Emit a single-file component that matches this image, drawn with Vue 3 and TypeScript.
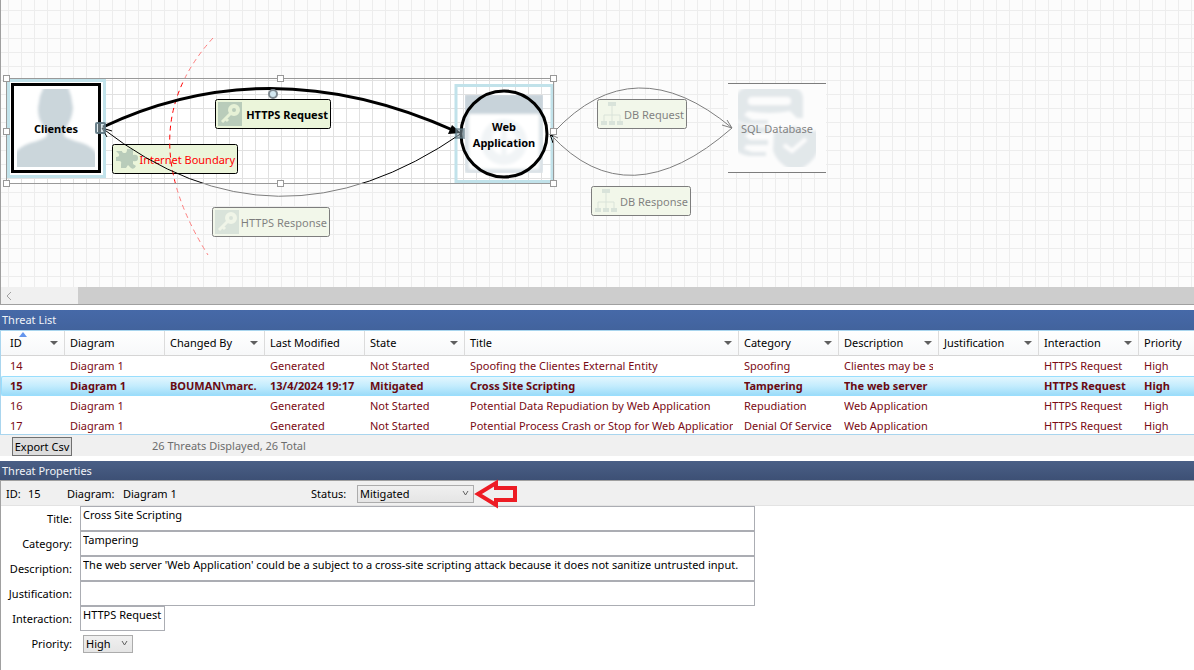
<script setup lang="ts">
import { ref } from 'vue'

type IconName = 'key' | 'puzzle' | 'tree'

interface FlowLabel {
  x: number
  y: number
  w: number
  text: string
  icon: IconName
  kind: 'plain' | 'strong' | 'boundary'
}

interface Column {
  key: string
  label: string
  filter: boolean
}

interface Threat {
  id: number
  cells: string[]
}

const labels: FlowLabel[] = [
  { x: 112, y: 144, w: 126, text: 'Internet Boundary', icon: 'puzzle', kind: 'boundary' },
  { x: 215, y: 99, w: 116, text: 'HTTPS Request', icon: 'key', kind: 'strong' },
  { x: 212, y: 207, w: 118, text: 'HTTPS Response', icon: 'key', kind: 'plain' },
  { x: 597, y: 99, w: 90, text: 'DB Request', icon: 'tree', kind: 'plain' },
  { x: 591, y: 186, w: 100, text: 'DB Response', icon: 'tree', kind: 'plain' },
]

const handles: [number, number][] = [
  [6, 78], [280, 78], [553, 78],
  [6, 131], [553, 131],
  [6, 183], [280, 183], [553, 183],
]

const columns: Column[] = [
  { key: 'id', label: 'ID', filter: true },
  { key: 'diagram', label: 'Diagram', filter: false },
  { key: 'changed', label: 'Changed By', filter: true },
  { key: 'modified', label: 'Last Modified', filter: false },
  { key: 'state', label: 'State', filter: true },
  { key: 'title', label: 'Title', filter: true },
  { key: 'category', label: 'Category', filter: true },
  { key: 'description', label: 'Description', filter: true },
  { key: 'justification', label: 'Justification', filter: true },
  { key: 'interaction', label: 'Interaction', filter: true },
  { key: 'priority', label: 'Priority', filter: false },
]

const threats: Threat[] = [
  { id: 14, cells: ['14', 'Diagram 1', '', 'Generated', 'Not Started', 'Spoofing the Clientes External Entity', 'Spoofing', 'Clientes may be s', '', 'HTTPS Request', 'High'] },
  { id: 15, cells: ['15', 'Diagram 1', 'BOUMAN\\marc.', '13/4/2024 19:17', 'Mitigated', 'Cross Site Scripting', 'Tampering', 'The web server', '', 'HTTPS Request', 'High'] },
  { id: 16, cells: ['16', 'Diagram 1', '', 'Generated', 'Not Started', 'Potential Data Repudiation by Web Application', 'Repudiation', 'Web Application', '', 'HTTPS Request', 'High'] },
  { id: 17, cells: ['17', 'Diagram 1', '', 'Generated', 'Not Started', 'Potential Process Crash or Stop for Web Application', 'Denial Of Service', 'Web Application', '', 'HTTPS Request', 'High'] },
]

const selectedId = ref(15)
const status = ref('Mitigated')
const priority = ref('High')
const title = ref('Cross Site Scripting')
const category = ref('Tampering')
const description = ref("The web server 'Web Application' could be a subject to a cross-site scripting attack because it does not sanitize untrusted input.")
const justification = ref('')
const interaction = ref('HTTPS Request')
</script>

<template>
  <main class="app">
    <section class="canvas" aria-label="Diagram">
      <svg class="diagram" role="img" aria-label="Data flow diagram">
        <defs>
          <pattern id="grid" x="8" y="10" width="13" height="14" patternUnits="userSpaceOnUse">
            <path d="M0.5 0V14M0 0.5H13" stroke="#e1e1e1" fill="none" />
          </pattern>
          <filter id="soft" x="-10%" y="-10%" width="120%" height="120%">
            <feGaussianBlur stdDeviation="1.5" />
          </filter>
          <filter id="softer" x="-10%" y="-10%" width="120%" height="120%">
            <feGaussianBlur stdDeviation="0.6" />
          </filter>
          <clipPath id="personClip"><rect x="17" y="89" width="78" height="78" /></clipPath>
          <clipPath id="webClip"><rect x="465" y="95" width="78" height="78" /></clipPath>
          <clipPath id="dbClip"><rect x="738" y="89" width="78" height="78" /></clipPath>
        </defs>

        <rect width="100%" height="100%" fill="#fff" />
        <rect width="100%" height="100%" fill="url(#grid)" />

        <!-- external entity -->
        <rect x="8.5" y="80.5" width="96" height="96" fill="#fff" stroke="#c1e2ea" stroke-width="3" />
        <rect x="12.5" y="84.5" width="87" height="87" fill="#fff" stroke="#000" stroke-width="3" />
        <g clip-path="url(#personClip)">
          <path
            filter="url(#soft)"
            fill="#cbd6db"
            d="M45 84H67L71 96L73 108Q72 118 68 124Q66 129 64 131V136Q70 140 82 143Q94 147 97 155V172H14V155Q18 147 30 143Q42 140 47 136V131Q44 128 42 124Q38 118 38 108L40 96Z"
          />
        </g>
        <text class="node strong" x="56" y="133">Clientes</text>

        <!-- process -->
        <rect x="456" y="85.5" width="96" height="96" fill="none" stroke="#c1e2ea" stroke-width="3" />
        <circle cx="504" cy="134" r="43" fill="#fff" />
        <g clip-path="url(#webClip)">
          <g filter="url(#soft)">
            <rect x="464" y="94" width="80" height="80" rx="4" fill="#d9e1e6" />
            <rect x="464" y="94" width="80" height="20" fill="#c8d3da" />
            <rect x="469" y="114" width="70" height="55" fill="#fff" />
            <circle cx="504" cy="142" r="18" fill="none" stroke="#f1f4f6" stroke-width="10" />
            <path d="M492 142H516M504 128V156" stroke="#f1f4f6" stroke-width="5" />
          </g>
        </g>
        <circle cx="504" cy="134" r="43" fill="none" stroke="#000" stroke-width="3" />
        <text class="node strong" x="504" y="131">Web</text>
        <text class="node strong" x="504" y="147">Application</text>

        <!-- data store -->
        <rect x="728" y="83" width="98" height="90" fill="#fff" />
        <g clip-path="url(#dbClip)">
          <g filter="url(#soft)">
            <path fill="#cbd6db" d="M736 96Q740 87 750 87H790Q802 88 803 97V118H797L790 111Q770 115 748 111L744 115L752 120H768V124H745L736 120Z" />
            <rect x="748" y="97" width="43" height="8" rx="4" fill="#fff" />
            <path fill="#cbd6db" d="M736 121L747 127H770V133H748L745 136L750 140H768V145H746L744 149L752 152H766V156H748Q736 153 736 148Z" />
            <path fill="#cbd6db" d="M774 132Q786 131 794 126Q802 131 818 131V151Q812 165 795 172Q776 163 773 150Z" />
            <path fill="none" stroke="#fff" stroke-width="4" d="M784 145L792 151L806 139" />
          </g>
        </g>
        <path d="M728 83.5H826M728 172.5H826" stroke="#000" />
        <text class="node" x="777" y="133">SQL Database</text>

        <!-- flow captions -->
        <g v-for="l in labels" :key="l.text" :transform="`translate(${l.x} ${l.y})`">
          <rect x="0.5" y="0.5" :width="l.w - 1" height="29" rx="2" fill="#ebf5da" stroke="#000" />
          <g v-if="l.icon === 'key'" filter="url(#softer)">
            <rect x="3" y="3" width="24" height="24" fill="#b9ccba" />
            <circle cx="19" cy="11" r="4" fill="none" stroke="#e6f1d6" stroke-width="4" />
            <path d="M16 14L7 23M10 19L13 22" stroke="#e6f1d6" stroke-width="3" fill="none" />
          </g>
          <g v-else-if="l.icon === 'puzzle'" filter="url(#softer)">
            <path fill="#b9ccba" d="M4 7H10Q10 9 13 9Q15 9 15 5H21V11Q26 10 26 14Q26 18 21 17V20L24 22Q22 26 19 24L16 21L14 24H9V20Q10 17 7 17H4V13Q8 13 7 10Z" />
          </g>
          <g v-else filter="url(#softer)" stroke="#b9ccba" fill="#b9ccba">
            <path d="M15 6V22M7 22V16H23V22" fill="none" stroke-width="1" />
            <path stroke="none" d="M11 3H19V7H11ZM4 22H10V26H4ZM12 22H18V26H12ZM20 22H26V26H20Z" />
          </g>
          <text class="caption" :class="l.kind" :x="l.w - 3" y="20">{{ l.text }}</text>
        </g>

        <!-- flows -->
        <path d="M213 38Q129 130 208 255" fill="none" stroke="#f00" stroke-dasharray="5 4" />
        <path d="M103 127Q270 48 455 131" fill="none" stroke="#000" stroke-width="3" />
        <path d="M448 134L461 133L452 125Z" fill="#000" />
        <path d="M462 133Q275 262 102 128M112 131L102 128L107 137" fill="none" stroke="#000" />
        <path d="M554 132Q634 46 732 128M722 125L732 128L727 120" fill="none" stroke="#000" />
        <path d="M732 128Q628 219 551 135M558 138L550 134L553 143" fill="none" stroke="#000" />

        <rect x="96" y="123" width="9" height="10" rx="1" fill="#bcd6e0" fill-opacity="0.5" stroke="#5c7480" stroke-width="2" stroke-opacity="0.9" />
        <rect x="456" y="129" width="8" height="9" fill="#8fa9b6" fill-opacity="0.5" stroke="#5c7480" stroke-width="2" stroke-opacity="0.6" />

        <!-- everything outside the selection is faded -->
        <path fill="#f9f9f9" fill-opacity="0.5" fill-rule="evenodd" d="M0 0H4000V287H0ZM6 78V183H553V78Z" />

        <rect x="6.5" y="78.5" width="547" height="105" fill="none" stroke="#999" />
        <rect
          v-for="([hx, hy], i) in handles"
          :key="i"
          :x="hx - 2.5"
          :y="hy - 2.5"
          width="6"
          height="6"
          fill="#fff"
          stroke="#999"
        />
        <circle cx="273" cy="94" r="4" fill="#d3e8f1" stroke="#7f8990" stroke-width="2" />
      </svg>
      <div class="scrollbar">
        <button class="scroll-left" type="button" aria-label="Scroll left">
          <svg width="6" height="8"><path d="M5 0L1 4L5 8" fill="none" stroke="#a0a0a0" /></svg>
        </button>
        <div class="thumb"></div>
      </div>
    </section>

    <h2 class="bar list-bar">Threat List</h2>
    <div class="list">
      <table>
        <colgroup>
          <col v-for="c in columns" :key="c.key" :class="`col-${c.key}`" />
        </colgroup>
        <thead>
          <tr>
            <th v-for="c in columns" :key="c.key" scope="col">
              <div class="head">
                <span>{{ c.label }}</span>
                <button v-if="c.filter" type="button" :aria-label="`Filter ${c.label}`">
                  <svg width="8" height="4"><path d="M0 0H8L4 4Z" fill="#5f5f5f" /></svg>
                </button>
              </div>
              <svg v-if="c.key === 'id'" class="sort" width="8" height="5"><path d="M4 0L8 5H0Z" fill="#6495ed" /></svg>
            </th>
          </tr>
        </thead>
        <tbody>
          <tr v-for="t in threats" :key="t.id" :class="{ selected: t.id === selectedId }" @click="selectedId = t.id">
            <td v-for="(cell, i) in t.cells" :key="i"><div class="cell">{{ cell }}</div></td>
          </tr>
        </tbody>
      </table>
    </div>
    <div class="list-foot">
      <button class="export" type="button">Export Csv</button>
      <span>26 Threats Displayed, 26 Total</span>
    </div>

    <h2 class="bar props-bar">Threat Properties</h2>
    <section class="props">
      <div class="summary">
        <span class="s-id">ID:</span><span class="s-num">15</span>
        <span class="s-diagram">Diagram:</span><span class="s-name">Diagram 1</span>
        <label class="s-status" for="status">Status:</label>
        <span class="combo status">
          <select id="status" v-model="status">
            <option>Not Started</option>
            <option>Needs Investigation</option>
            <option>Not Applicable</option>
            <option>Mitigated</option>
          </select>
          <svg class="chevron" width="7" height="5"><path d="M1 0L3.5 4L6 0" fill="none" stroke="#606060" /></svg>
          <svg class="pointer" width="43" height="30">
            <path d="M3 15L21 4V9H40V21H21V26Z" fill="none" stroke="#ed1c24" stroke-width="4" />
          </svg>
        </span>
      </div>
      <form class="form" @submit.prevent>
        <label for="title">Title:</label>
        <input id="title" v-model="title" type="text" />
        <label for="category">Category:</label>
        <input id="category" v-model="category" type="text" />
        <label for="description">Description:</label>
        <input id="description" v-model="description" type="text" />
        <label for="justification">Justification:</label>
        <input id="justification" v-model="justification" type="text" />
        <label for="interaction">Interaction:</label>
        <input id="interaction" v-model="interaction" class="short" type="text" />
        <label for="priority">Priority:</label>
        <span class="combo priority">
          <select id="priority" v-model="priority">
            <option>High</option>
            <option>Medium</option>
            <option>Low</option>
          </select>
          <svg class="chevron" width="7" height="5"><path d="M1 0L3.5 4L6 0" fill="none" stroke="#606060" /></svg>
        </span>
      </form>
    </section>
  </main>
</template>

<style>
body {
  margin: 0;
  background: #fff;
}
</style>

<style scoped>
.app {
  display: flex;
  flex-direction: column;
  min-height: 100vh;
  font: 11px/16px "Noto Sans", "Open Sans", sans-serif;
  color: #000;
  overflow: hidden;
}
button,
input,
select {
  font: inherit;
  color: inherit;
  box-sizing: border-box;
  margin: 0;
  border-radius: 0;
}
.canvas {
  border-left: 1px solid #a0a0a0;
  border-bottom: 1px solid #a0a0a0;
  margin-bottom: 5px;
}
.diagram {
  display: block;
  width: calc(100% + 1px);
  height: 287px;
  margin-left: -1px;
  clip-path: inset(0 0 0 1px);
}
.node {
  text-anchor: middle;
}
.caption {
  text-anchor: end;
}
.node.strong,
.caption.strong {
  font-weight: 700;
}
.caption.boundary {
  fill: #f00;
}
.scrollbar {
  display: flex;
  height: 17px;
}
.scroll-left {
  width: 77px;
  border: 0;
  padding: 0 5px;
  background: #f0f0f0;
  text-align: left;
  line-height: 0;
}
.thumb {
  flex: 1;
  background: #cdcdcd;
}
.bar {
  margin: 0;
  padding: 0 2px;
  font-size: 11px;
  font-weight: 400;
  line-height: 20px;
  color: #f0f3f8;
}
.list-bar {
  background: linear-gradient(#4669a8, #42639d);
}
.props-bar {
  background: linear-gradient(#4a5f86, #3d5075);
  line-height: 19px;
}
.list {
  border: 1px solid #a9d5ee;
  border-right: 0;
}
table {
  width: 100%;
  table-layout: fixed;
  border-collapse: separate;
  border-spacing: 0;
}
col {
  width: 100px;
}
.col-id {
  width: 64px;
}
.col-title {
  width: 274px;
}
.col-priority {
  width: auto;
}
th {
  position: relative;
  height: 24px;
  padding: 0 6px 0 5px;
  border-right: 1px solid #dcdcdc;
  border-bottom: 1px solid #d5d5d5;
  background: linear-gradient(#fff, #f7f8f9);
  font-weight: 400;
  text-align: left;
}
th:last-child {
  border-right: 0;
}
th:first-child,
td:first-child {
  padding-left: 9px;
}
.head {
  display: flex;
  align-items: center;
  justify-content: space-between;
  white-space: nowrap;
}
.head button {
  border: 0;
  padding: 0;
  background: none;
  line-height: 0;
}
.sort {
  position: absolute;
  left: 18px;
  top: 1px;
}
td {
  height: 20px;
  box-sizing: border-box;
  padding: 1px 6px 0 5px;
  color: #7a0a14;
  vertical-align: top;
}
tr:last-child td {
  height: 18px;
}
.cell {
  height: 17px;
  line-height: 18px;
  overflow: hidden;
  white-space: nowrap;
}
.selected td {
  padding-top: 0;
  border-top: 1px solid #99defd;
  border-bottom: 1px solid #99defd;
  background: linear-gradient(#e3f6fe, #c3ecfd 50%, #9cdcf9);
  color: #6a0a12;
  font-weight: 700;
}
.selected td:first-child {
  border-left: 1px solid #99defd;
  border-radius: 2px 0 0 2px;
  padding-left: 8px;
}
.list-foot {
  display: flex;
  align-items: center;
  height: 21px;
  padding-left: 12px;
  margin-bottom: 5px;
  background: #f0f0f0;
  color: #6d6d6d;
}
.export {
  width: 60px;
  height: 19px;
  margin-right: 80px;
  padding: 0;
  border: 1px solid #707070;
  background: #ddd;
  color: #000;
  line-height: 17px;
  align-self: flex-end;
}
.props {
  flex: 1;
  border-left: 1px solid #a0a0a0;
  border-top: 1px solid #a0a0a0;
}
.summary {
  display: flex;
  align-items: center;
  height: 22px;
  padding: 2px 0 0 5px;
  border-bottom: 1px solid #e3e3e3;
  background: #f0f0f0;
  white-space: nowrap;
}
.s-id {
  width: 22px;
}
.s-num {
  width: 39px;
}
.s-diagram {
  width: 56px;
}
.s-name {
  width: 188px;
}
.s-status {
  width: 46px;
}
.combo {
  position: relative;
  display: block;
  height: 18px;
}
.combo select {
  display: block;
  width: 100%;
  height: 18px;
  padding: 0 2px;
  border: 1px solid #acacac;
  background: linear-gradient(#f0f0f0, #e5e5e5);
  appearance: none;
  line-height: 16px;
}
.combo.status {
  width: 117px;
}
.combo.priority {
  width: 50px;
  margin-left: 3px;
}
.chevron {
  position: absolute;
  right: 5px;
  top: 6px;
  pointer-events: none;
}
.pointer {
  position: absolute;
  left: 118px;
  top: -6px;
  overflow: visible;
  pointer-events: none;
}
.form {
  display: grid;
  grid-template-columns: 71px minmax(0, 675px);
  column-gap: 8px;
  grid-auto-rows: 25px;
  align-items: center;
}
.form label {
  text-align: right;
  white-space: nowrap;
}
.form input {
  width: 100%;
  height: 25px;
  padding: 0 2px 8px;
  border: 1px solid #abadb3;
  background: #fff;
  outline: 0;
}
.form input.short {
  width: 85px;
}
</style>
